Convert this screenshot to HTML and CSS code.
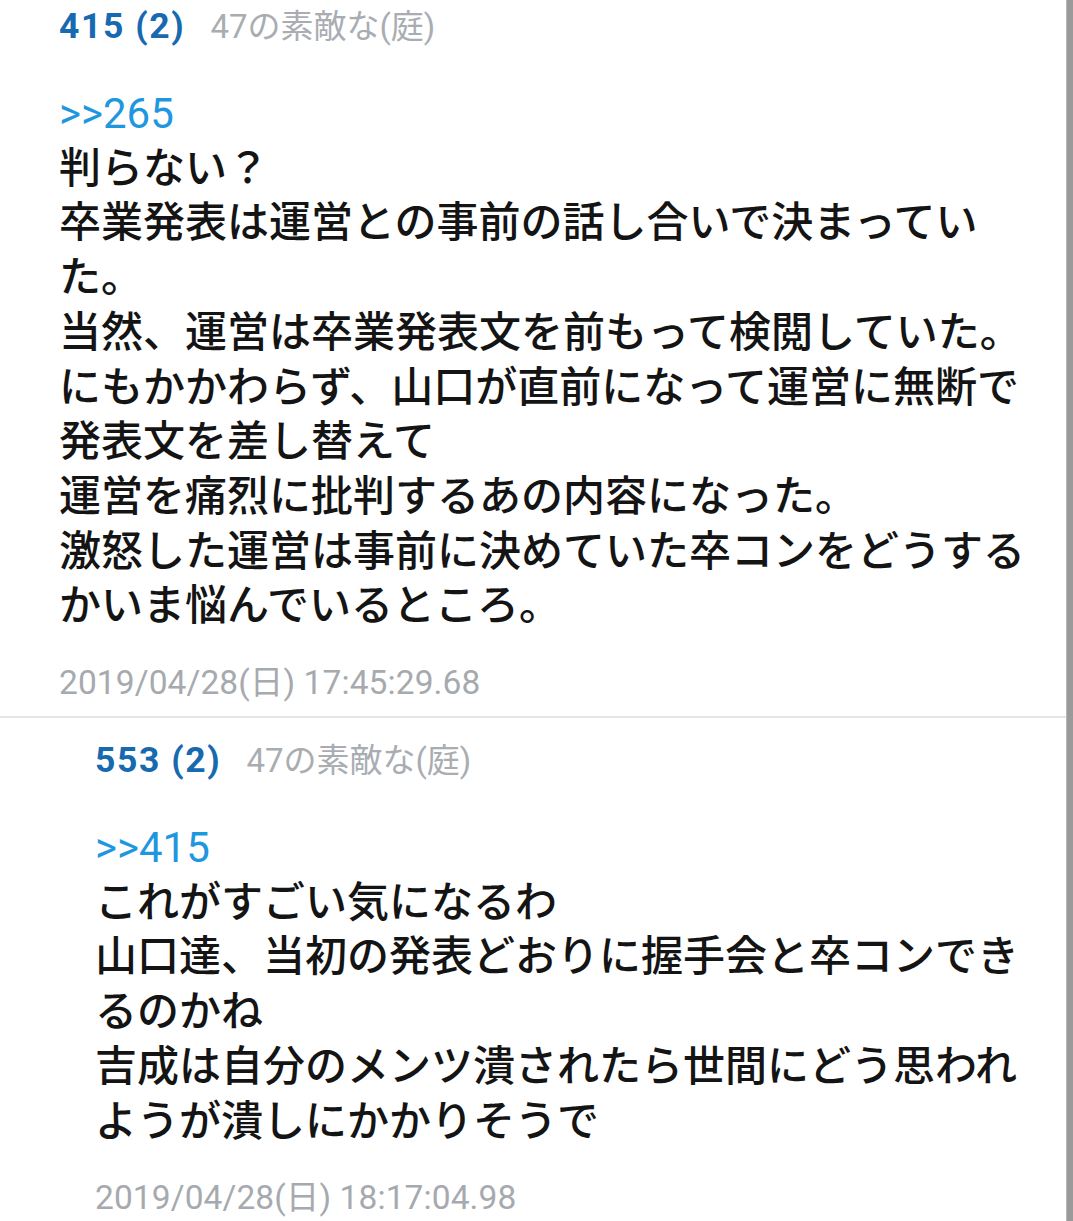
FILE: index.html
```html
<!DOCTYPE html>
<html lang="ja">
<head>
<meta charset="utf-8">
<title>レス</title>
<link rel="stylesheet" href="styles.css">
</head>
<body>
<div class="page">
  <main class="thread">
    <article class="post post-first">
      <header class="post-head">
        <span class="post-no">415 (2)</span>
        <span class="post-name">47の素敵な(庭)</span>
      </header>
      <div class="post-body">
        <a class="anchor">&gt;&gt;265</a><br>
        判らない？<br>
        卒業発表は運営との事前の話し合いで決まっていた。<br>
        当然、運営は卒業発表文を前もって検閲していた。<br>
        にもかかわらず、山口が直前になって運営に無断で発表文を差し替えて<br>
        運営を痛烈に批判するあの内容になった。<br>
        激怒した運営は事前に決めていた卒コンをどうするかいま悩んでいるところ。
      </div>
      <div class="post-date">2019/04/28(日) 17:45:29.68</div>
    </article>
    <article class="post post-reply">
      <header class="post-head">
        <span class="post-no">553 (2)</span>
        <span class="post-name">47の素敵な(庭)</span>
      </header>
      <div class="post-body">
        <a class="anchor">&gt;&gt;415</a><br>
        これがすごい気になるわ<br>
        山口達、当初の発表どおりに握手会と卒コンできるのかね<br>
        吉成は自分のメンツ潰されたら世間にどう思われようが潰しにかかりそうで
      </div>
      <div class="post-date">2019/04/28(日) 18:17:04.98</div>
    </article>
  </main>
  <div class="scrollbar"></div>
</div>
</body>
</html>
```

FILE: styles.css
```css
html, body {
  margin: 0;
  padding: 0;
  background: #ffffff;
}

body {
  font-family: "Roboto", "Noto Sans CJK JP", sans-serif;
  color: #141414;
}

.page {
  display: flex;
  min-height: 100vh;
}

.thread {
  flex: 1;
  min-width: 0;
}

.scrollbar {
  width: 6px;
  flex: none;
  background: #9a9a9a;
  border-left: 1px solid #b8b8b8;
}

.post {
  padding-right: 30px;
}

.post-first {
  padding-top: 4px;
  padding-left: 59px;
  padding-bottom: 11px;
  border-bottom: 2px solid #e6e6e6;
}

.post-reply {
  padding-top: 20px;
  padding-left: 95px;
}

.post-head {
  display: flex;
  align-items: baseline;
  height: 44px;
  line-height: 44px;
}

.post-no {
  font-size: 35.5px;
  font-weight: 700;
  color: #1769b0;
  letter-spacing: 1.6px;
  margin-right: 25px;
}

.post-name {
  font-size: 33px;
  color: #a9adb2;
}

.post-body {
  margin-top: 39px;
  font-size: 42px;
  font-weight: 500;
  line-height: 54.7px;
  color: #141414;
}

.anchor {
  color: #1f97df;
  font-weight: 400;
  text-decoration: none;
}

.post-date {
  margin-top: 27px;
  font-size: 33.5px;
  line-height: 44px;
  letter-spacing: 0.1px;
  color: #a6aaaf;
}
```
